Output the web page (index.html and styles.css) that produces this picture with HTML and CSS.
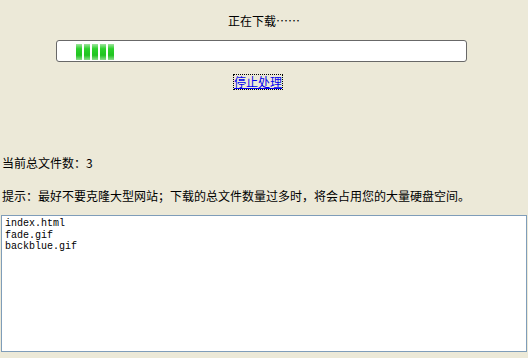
FILE: index.html
```html
<!DOCTYPE html>
<html lang="zh-CN">
<head>
  <meta charset="UTF-8">
  <title>正在下载</title>
  <link rel="stylesheet" href="styles.css">
</head>
<body>
  <div class="status">
    <p class="title">正在下载……</p>
    <div class="progress">
      <span class="block"></span>
      <span class="block"></span>
      <span class="block"></span>
      <span class="block"></span>
      <span class="block"></span>
    </div>
    <a href="#" class="stop">停止处理</a>
  </div>

  <p class="count">当前总文件数：3</p>
  <p class="hint">提示：最好不要克隆大型网站；下载的总文件数量过多时，将会占用您的大量硬盘空间。</p>

  <textarea class="files" readonly>index.html
fade.gif
backblue.gif</textarea>
</body>
</html>
```

FILE: styles.css
```css
html, body {
  margin: 0;
  height: 100%;
}
body {
  background-color: #ece9d8;
  color: #000;
  font-family: "Noto Sans CJK SC", "Liberation Sans", sans-serif;
  font-size: 12px;
  overflow: hidden;
}
.status {
  text-align: center;
  padding-top: 13px;
}
.title {
  margin: 0;
  line-height: 16px;
}
.progress {
  display: flex;
  gap: 2px;
  box-sizing: border-box;
  width: 411px;
  height: 22px;
  margin: 11px 0 0 56px;
  padding: 3px 0 0 19px;
  background: #fff;
  border: 1px solid #686868;
  border-radius: 3px;
}
.block {
  width: 6px;
  height: 16px;
  background: linear-gradient(to bottom, #9fe59f 0%, #2bd12b 30%, #20c420 70%, #8ddc8d 100%);
}
.stop {
  display: inline-block;
  margin: 13px 0 0 -12px;
  line-height: 14px;
  color: #0000ee;
  outline: 1px dotted #000;
}
.count {
  margin: 65px 0 0 2px;
  line-height: 16px;
}
.hint {
  margin: 17px 0 0 2px;
  line-height: 16px;
}
.files {
  display: block;
  box-sizing: border-box;
  width: 526px;
  height: 137px;
  margin: 11px 0 0 1px;
  padding: 2px 3px;
  border: 1px solid #7f9db9;
  background: #fff;
  font-family: "Liberation Mono", monospace;
  font-size: 10px;
  line-height: 11.5px;
  resize: none;
  outline: none;
}
```
